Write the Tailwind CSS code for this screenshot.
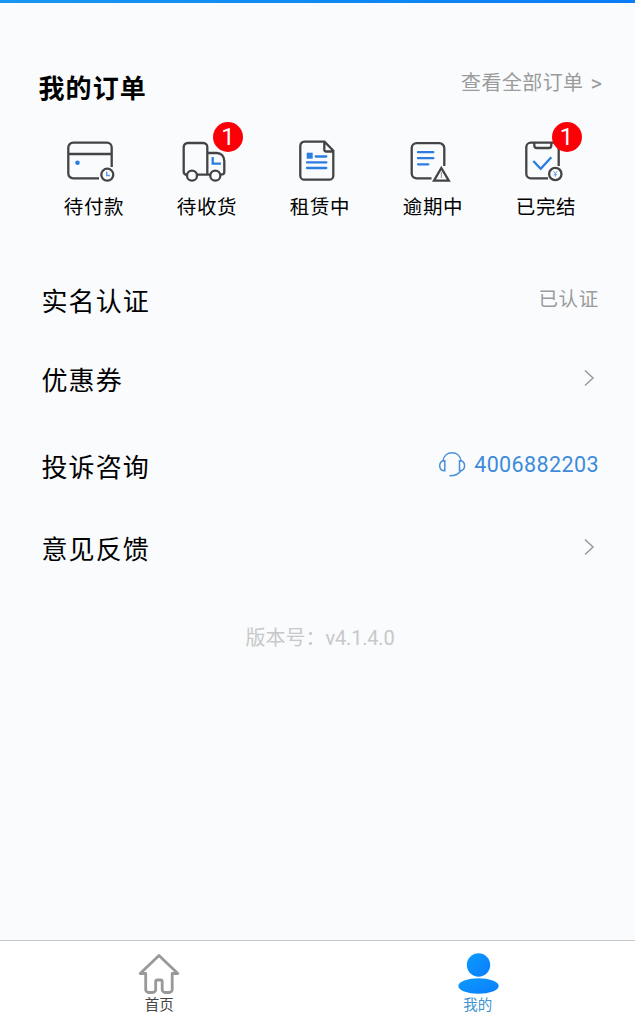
<!DOCTYPE html>
<html lang="zh-CN">
<head>
  <meta charset="UTF-8" />
  <meta name="viewport" content="width=device-width, initial-scale=1.0" />
  <title>我的</title>
  <script src="https://cdn.jsdelivr.net/npm/@tailwindcss/browser@4"></script>
</head>
<body class="h-screen flex flex-col overflow-hidden bg-[#f9fbfd] text-black font-['Roboto','Noto_Sans_CJK_SC',sans-serif]">
  <!-- Bottom edge of the banner -->
  <div class="h-[3px] shrink-0 bg-gradient-to-r from-[#1a96f0] to-[#0b7cf8]"></div>

  <main class="flex-1 flex flex-col">
    <!-- Orders -->
    <section class="h-[253px] pt-[66px]">
      <div class="flex justify-between items-start pl-[38.5px] pr-[33px] h-[62px]">
        <h1 class="text-[26px] leading-[40px] font-bold tracking-[1.1px]">我的订单</h1>
        <a href="#" class="flex gap-[7px] text-[20px] leading-[29px] tracking-[0.4px] text-[#9b9b9b]">查看全部订单 <span class="text-[22px] tracking-normal">&gt;</span></a>
      </div>
      <ul class="grid grid-cols-5 w-[565px] ml-[37.5px] mt-[5px] text-[19.5px] leading-[28px] tracking-[0.7px]">
        <li class="flex flex-col items-center gap-[8px]">
          <svg class="w-[60px] h-[50px]" viewBox="0 0 60 50" fill="none" stroke="#444" stroke-width="2.3">
            <path d="M47.7 31V11.5a4.8 4.8 0 0 0-4.8-4.8H9.1a4.8 4.8 0 0 0-4.8 4.8v26a4.8 4.8 0 0 0 4.8 4.8H35M4.3 18h43.4" />
            <circle cx="13.5" cy="26.7" r="2.3" fill="#2b7de0" stroke="none" />
            <circle cx="43.3" cy="38.7" r="6" />
            <path d="M42.7 35.5v4h3.3" stroke="#5a9be8" stroke-width="1.4" />
          </svg>
          <span>待付款</span>
        </li>
        <li class="flex flex-col items-center gap-[8px]">
          <div class="relative">
            <svg class="w-[60px] h-[50px]" viewBox="0 0 60 50" fill="none" stroke="#444" stroke-width="2.3">
              <path d="M10 38.7c-2 0-3.3-1-3.3-3V11a4 4 0 0 1 4-4h15.6a4 4 0 0 1 4 4v27.7M20 38.7h13.3M30.3 17h9.5c4.5 0 7.5 3.5 7.5 8v11c0 1.7-1 2.7-4 2.7" />
              <circle cx="15" cy="39.7" r="5" />
              <circle cx="38.3" cy="39.7" r="5" />
              <path d="M35.7 21v6.6h8.2" stroke="#2b7de0" />
            </svg>
            <span class="absolute left-[36px] -top-[14px] size-[30px] rounded-full bg-[#fb0007] text-white text-[24px] leading-[30px] tracking-normal text-center">1</span>
          </div>
          <span>待收货</span>
        </li>
        <li class="flex flex-col items-center gap-[8px]">
          <svg class="w-[60px] h-[50px]" viewBox="0 0 60 50" fill="none" stroke="#444" stroke-width="2.3">
            <path d="M34.5 5.7H14.3a4 4 0 0 0-4 4v30a4 4 0 0 0 4 4h25a4 4 0 0 0 4-4V14.8ZM34.3 6v7.5a2 2 0 0 0 2 2h7" />
            <path d="M16.7 16.7h6v6h-6z" fill="#2b7de0" stroke="none" />
            <path d="M25.7 20.5h10.6M17 26.4h19.3M17 32h19.3" stroke="#2b7de0" stroke-linecap="round" />
          </svg>
          <span>租赁中</span>
        </li>
        <li class="flex flex-col items-center gap-[8px]">
          <svg class="w-[60px] h-[50px]" viewBox="0 0 60 50" fill="none" stroke="#444" stroke-width="2.3">
            <path d="M41.3 30V12.2a5 5 0 0 0-5-5H13.7a5 5 0 0 0-5 5v25.1a5 5 0 0 0 5 5H28.5" />
            <path d="M15 16.2h15.3M15 22.2h15.3M15 28.3h10.3" stroke="#2b7de0" stroke-linecap="round" />
            <path d="M38.3 32 31 44.6h14.8Z" />
            <path d="M38.4 36v6" stroke="#8ea4bd" stroke-width="1.2" />
          </svg>
          <span>逾期中</span>
        </li>
        <li class="flex flex-col items-center gap-[8px]">
          <div class="relative">
            <svg class="w-[60px] h-[50px]" viewBox="0 0 60 50" fill="none" stroke="#444" stroke-width="2.3">
              <path d="M42.7 30V11.2a4.5 4.5 0 0 0-4.5-4.5H14.8a4.5 4.5 0 0 0-4.5 4.5v26.6a4.5 4.5 0 0 0 4.5 4.5H32" />
              <path d="M18.3 7v2.5a2.5 2.5 0 0 0 2.5 2.5h12a2.5 2.5 0 0 0 2.5-2.5V7" />
              <path d="m17.3 25 7.4 7.7L35.3 21.2" stroke="#2b7de0" />
              <circle cx="39.3" cy="38" r="6.2" />
              <path d="m37.6 35.3 1.7 2.5 1.7-2.5M39.3 37.8v3M37.6 38.7H41" stroke="#5a9be8" stroke-width=".9" />
            </svg>
            <span class="absolute left-[35.5px] -top-[14px] size-[30px] rounded-full bg-[#fb0007] text-white text-[24px] leading-[30px] tracking-normal text-center">1</span>
          </div>
          <span>已完结</span>
        </li>
      </ul>
    </section>

    <!-- Settings -->
    <section class="pt-[2px] pl-[41.5px] text-[26px] tracking-[1.1px]">
      <div class="flex justify-between items-center h-[89px] pr-[36px]">
        <h2>实名认证</h2>
        <span class="text-[19.5px] tracking-[0.7px] text-[#9b9b9b] -mt-[5px]">已认证</span>
      </div>
      <div class="flex justify-between items-center h-[69px] pr-[40px]">
        <h2>优惠券</h2>
        <svg class="w-[12px] h-[18px] -mt-[7px]" viewBox="0 0 12 18" fill="none" stroke="#999" stroke-width="1.5"><path d="m2 1.5 8 7.5-8 7.5" /></svg>
      </div>
      <div class="flex justify-between items-center h-[105px] pr-[36px]">
        <h2>投诉咨询</h2>
        <a href="tel:4006882203" class="flex items-center gap-[8px] text-[21.5px] tracking-[0.4px] text-[#3e8bda] -mt-[6px]">
          <svg class="w-[28px] h-[26px] -mt-[3px]" viewBox="0 0 28 26" fill="none" stroke="#4a90d9" stroke-width="1.5">
            <path d="M4.8 10C5.6 5 9.300 1.700 14 1.700S22.400 5 23.200 10" />
            <path d="M6.800 9.700v10C3.500 19.700 1.700 17.500 1.700 14.700s1.800-5 5.100-5ZM21.500 9.700v10c3.300 0 5.100-2.200 5.100-5s-1.800-5-5.100-5Z" />
            <path d="M23.200 19.300c-2 3.400-6 5.500-11.700 5.500" />
          </svg>
          4006882203
        </a>
      </div>
      <div class="flex justify-between items-center h-[58px] pr-[40px]">
        <h2>意见反馈</h2>
        <svg class="w-[12px] h-[18px] -mt-[7px]" viewBox="0 0 12 18" fill="none" stroke="#999" stroke-width="1.5"><path d="m2 1.5 8 7.5-8 7.5" /></svg>
      </div>
    </section>

    <p class="mt-[44px] ml-[5px] text-center text-[20px] leading-[30px] text-[#c8c8c8]">版本号：<span class="tracking-[-0.2px]">v4.1.4.0</span></p>
  </main>

  <!-- Tab bar -->
  <nav class="h-[84px] shrink-0 grid grid-cols-2 border-t border-[#c6c8cb] bg-white text-[14.5px] leading-[20px]">
    <a href="#" class="flex flex-col items-center gap-[2px] pt-[11px] pl-[1px] text-[#444]">
      <svg class="w-[44px] h-[42px]" viewBox="0 0 44 42" fill="none" stroke="#999" stroke-width="2.8" stroke-linejoin="round">
        <path d="M22 3.500 3.200 21.500H8.700V37.500a3 3 0 0 0 3 3h4a3 3 0 0 0 3-3V29.500a1.500 1.500 0 0 1 1.500-1.500h3.500a1.500 1.500 0 0 1 1.500 1.500v8a3 3 0 0 0 3 3h4a3 3 0 0 0 3-3V21.500h5.600Z" />
      </svg>
      首页
    </a>
    <a href="#" class="flex flex-col items-center gap-[2px] pt-[11px] pl-[3px] text-[#3e93d2]">
      <svg class="w-[44px] h-[42px]" viewBox="0 0 44 42">
        <defs>
          <linearGradient id="user" x1="0" y1="0" x2="1" y2="1">
            <stop offset="0" stop-color="#0b9bfd" />
            <stop offset="1" stop-color="#0b7dfd" />
          </linearGradient>
        </defs>
        <circle cx="22.5" cy="13" r="11.7" fill="url(#user)" />
        <ellipse cx="22.5" cy="34" rx="20.2" ry="7.8" fill="url(#user)" />
      </svg>
      我的
    </a>
  </nav>
</body>
</html>
